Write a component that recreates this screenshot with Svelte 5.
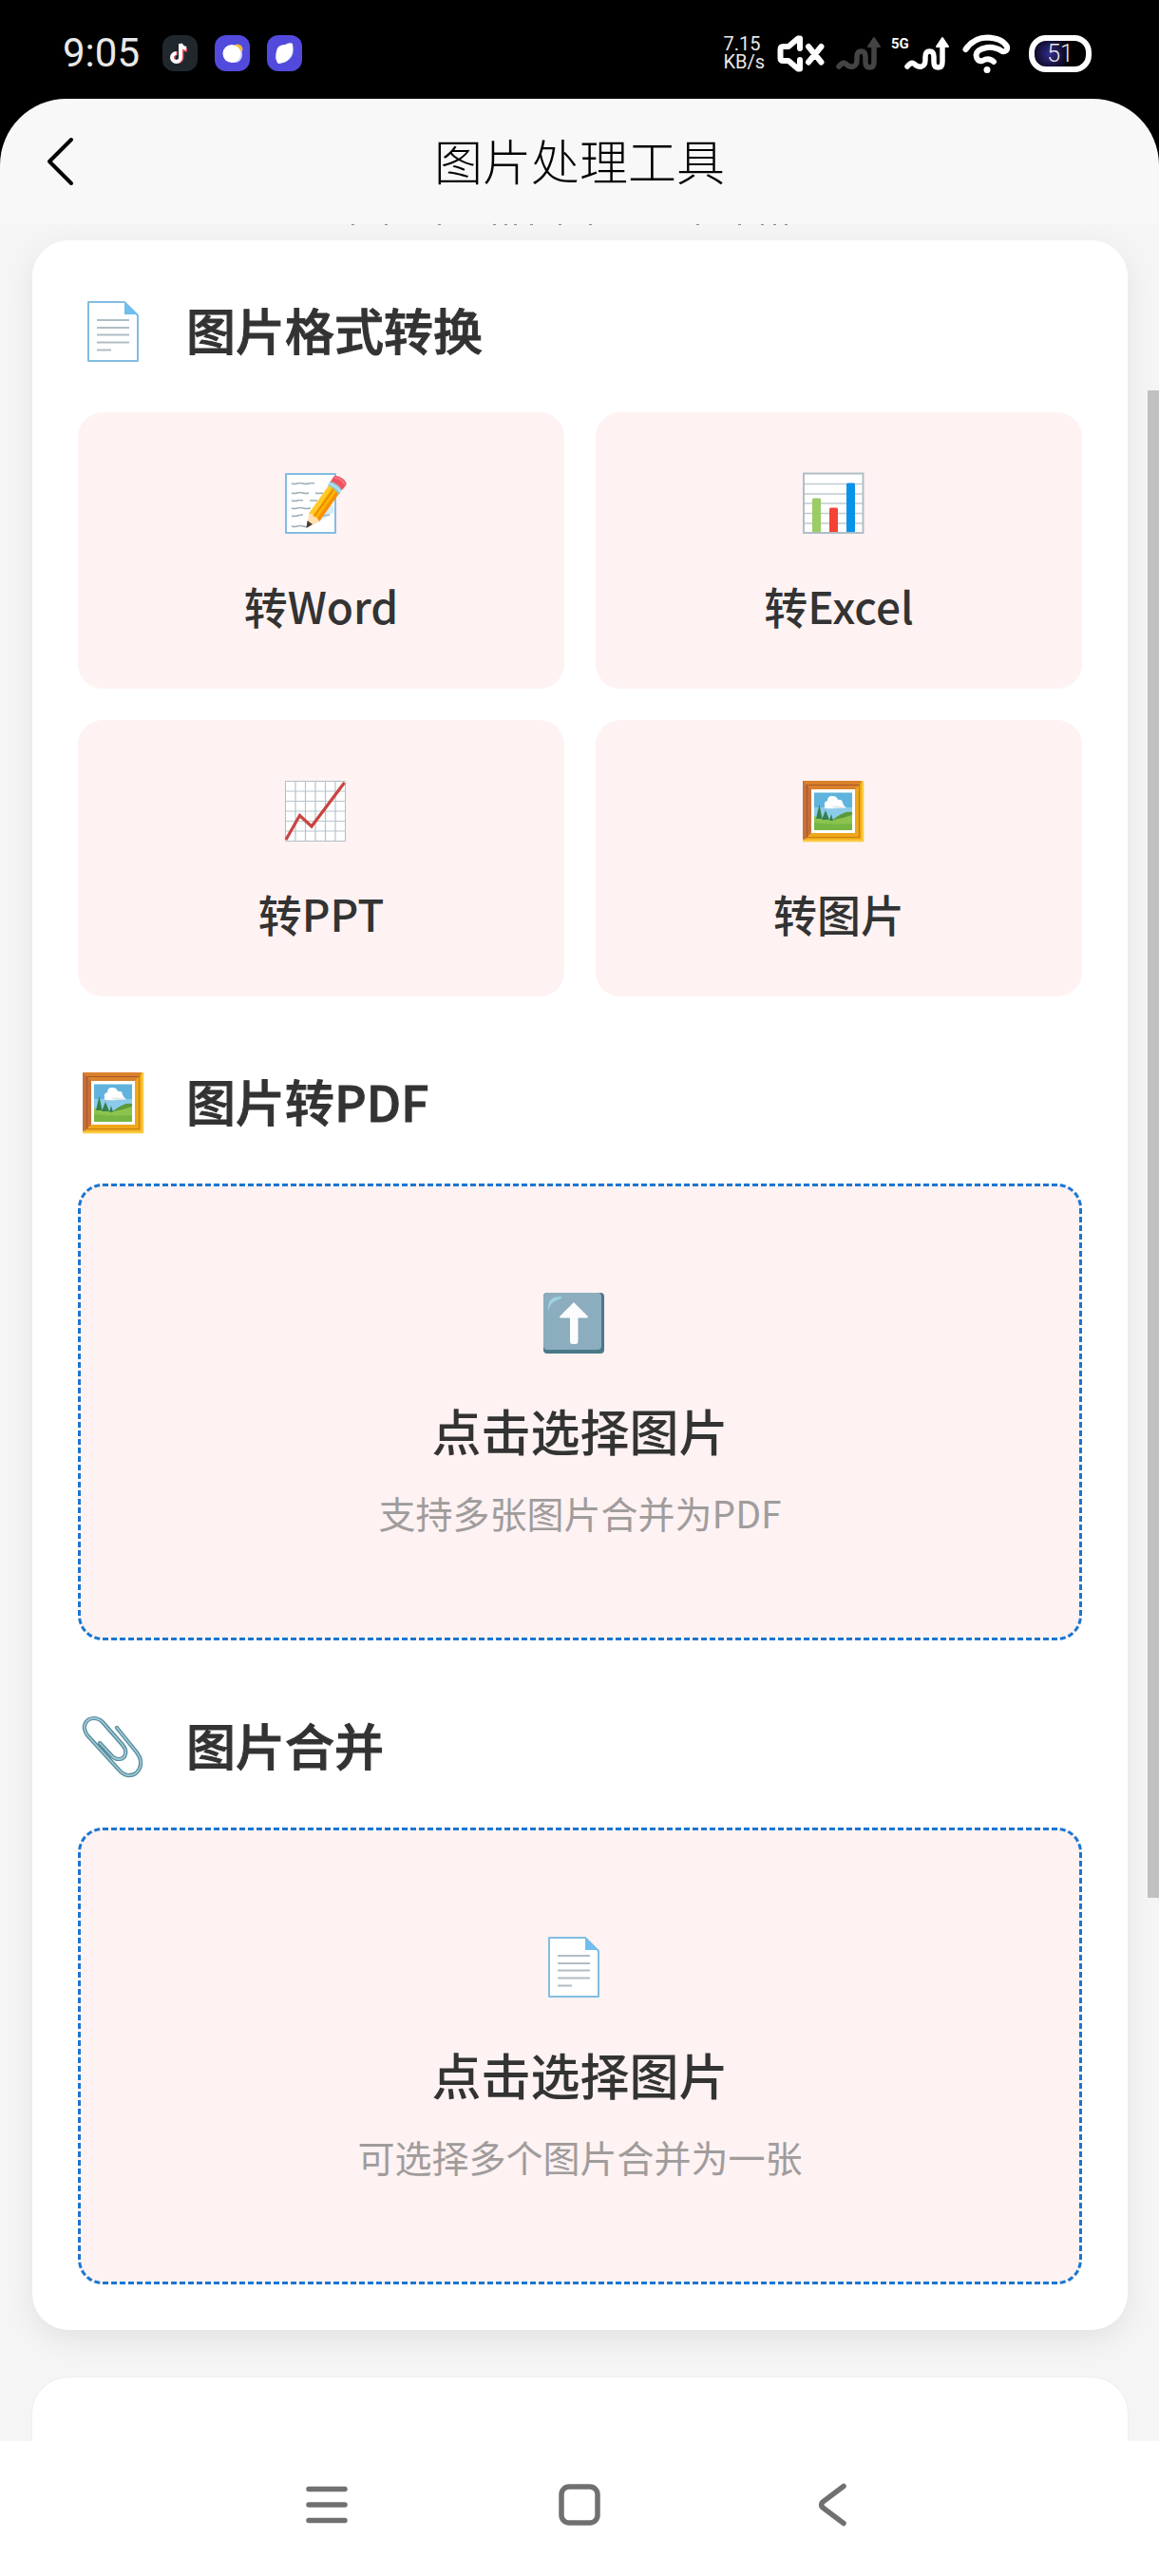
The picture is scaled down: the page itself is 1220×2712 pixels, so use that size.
<script lang="ts">
  const formats = [
    { icon: 'memo', label: '转Word' },
    { icon: 'bars', label: '转Excel' },
    { icon: 'trend', label: '转PPT' },
    { icon: 'frame', label: '转图片' },
  ];
  const uploads = [
    { icon: 'frame', title: '图片转PDF', zoneIcon: 'up', hint: '支持多张图片合并为PDF' },
    { icon: 'clip', title: '图片合并', zoneIcon: 'page', hint: '可选择多个图片合并为一张' },
  ];
  // visible lower ends of the intro line that has scrolled under the header
  const scrolledMarks = [370, 405, 461, 519, 531, 541, 558, 588, 620, 733, 777, 801, 814, 826];
</script>

{#snippet emoji(name: string)}
  <svg class="emoji" viewBox="0 0 64 64" aria-hidden="true">
    {#if name === 'page'}
      <path d="M6 1H44L58 15V63H6Z" fill="#fff" stroke="#82bde2" stroke-width="2" stroke-linejoin="round" />
      <path d="M44 1L58 14H44Z" fill="#70bdf0" />
      <path d="M15 20H49M15 28H49M15 35.500H49M15 43.500H49M15 51.500H30" stroke="#b0bec5" stroke-width="2" />
    {:else if name === 'memo'}
      <path d="M1 1H53V63H1Z" fill="#fff" stroke="#82bde2" stroke-width="2" stroke-linejoin="round" />
      <path d="M52 40Q44 48 27 55L50 33Z" fill="#d5ecfa" />
      <g fill="none" stroke="#9fb0b8" stroke-width="1.400">
        <path d="M7 11q3 1 6 0t6 0t6 0t6 0M7 21q3 1 6 0t6 0t6 0M32 21q3 1 8 0M7 29q3 1 6 0t6 0M26 29h8M7 37q3 1 6 0t6 0t8 0M7 45q3 1 6 0t6 -1M7 56q3 1 6 0t6 0t6 0M40 45l7 -1" />
      </g>
      <path d="M25 43L47 12L58 20L36 51Z" fill="#ffb300" />
      <path d="M25 43L47 12L50 14L29 46Z" fill="#ffca28" />
      <path d="M33 49L55 18L58 20L36 51Z" fill="#f59000" />
      <path d="M31 45L52 16" stroke="#e58600" stroke-width="1.500" />
      <path d="M25 43Q29 42 30 46Q34 46 36 51L23 58Z" fill="#ffe0b2" />
      <path d="M23.500 50L29 54L22.500 58Z" fill="#4a3c3a" />
      <path d="M45 13L48 8Q54 9 60 17L57 23Q52 16 45 13Z" fill="#8bccd8" />
      <path d="M46 11Q53 13 59 20" fill="none" stroke="#bde5eb" stroke-width="1.500" />
      <path d="M48 9L51 4Q54 1 61 6Q66 10 64 13L60 18Q56 11 48 9Z" fill="#ef5360" />
      <path d="M52 5Q59 5 63 12" fill="none" stroke="#f77680" stroke-width="2" />
    {:else if name === 'bars'}
      <path d="M0 0H64V64H0Z" fill="#fff" />
      <path d="M1 11.500H64M1 22H64M1 32H64M1 42.500H64M1 53H64" stroke="#c2cacf" stroke-width="1.300" />
      <path d="M1 0V63H64M0 .5H63.500V64" fill="none" stroke="#b0bec5" stroke-width="2" />
      <path d="M10 28q0 -1.500 1.500 -1.500h6q1.500 0 1.500 1.500V62H10Z" fill="#9ccc65" />
      <path d="M28 38q0 -1.500 1.500 -1.500h6q1.500 0 1.500 1.500V62H28Z" fill="#f44336" />
      <path d="M46 12q0 -1.500 1.500 -1.500h6q1.500 0 1.500 1.500V62H46Z" fill="#0b92ea" />
    {:else if name === 'trend'}
      <path d="M.5 .5H63.500V63.500H.5Z" fill="#fff" stroke="#b0bec5" />
      <path d="M11 0V64M21.500 0V64M32 0V64M42.500 0V64M53 0V64M0 11H64M0 21.500H64M0 32H64M0 42.500H64M0 53H64" stroke="#b8c4ca" stroke-width="1.200" />
      <path d="M1 62L15.500 36.500L28 48L62.500 2" fill="none" stroke="#c94440" stroke-width="3.200" />
    {:else if name === 'frame'}
      <path d="M0 0H64V64H0Z" fill="#e8a313" />
      <path d="M0 0H64L55 9H9Z" fill="#d9822b" />
      <path d="M0 0L9 9V55L0 64Z" fill="#c9703a" />
      <path d="M64 0V64H0L9 55H55V9Z" fill="#efa71b" />
      <path d="M0 63H63V0" fill="none" stroke="#fbc93d" stroke-width="2.500" />
      <path d="M4.500 60V4.500H60" fill="none" stroke="#a9572b" stroke-width="1.200" />
      <path d="M4.500 59.500H59.500V4.500" fill="none" stroke="#c98210" stroke-width="1.200" />
      <path d="M9 9H55V55H9Z" fill="#fff" />
      <path d="M12 12.500H52V52H12Z" fill="#5fb3dc" />
      <path d="M12 28H52V46H12Z" fill="#a5d8ef" opacity=".65" />
      <path d="M30 42Q38 36 43 34Q47 32 52 33V50H30Z" fill="#5a9a3c" />
      <path d="M12 37Q22 42 33 41Q44 39 52 36V52H12Z" fill="#8cc34e" />
      <path d="M12 44Q30 47 52 45V52H12Z" fill="#76b543" />
      <path d="M14 40L17.500 25L20.500 40ZM20 41L24 31L28 41ZM28 42L30 35L32 42Z" fill="#35804a" />
      <path d="M23 26q-1 -4 3 -5q0 -5 5 -5q5 0 6 4q4 -1 5 3q1 4 4 5q-12 2 -22 1q-2 -1 -1 -3Z" fill="#fff" />
      <path d="M30 28q4 -3 8 -1q3 -1 8 1.500q-8 1 -16 -.5Z" fill="#dfe8ee" />
    {:else if name === 'up'}
      <rect width="64" height="64" rx="4" fill="#4a7888" />
      <rect width="61" height="60" rx="4" fill="#8badbe" />
      <path d="M5 17Q4 4 18 4q3 1 -1 3Q8 9 6 17q-.5 3 -1 0Z" fill="#9fd0e0" />
      <path d="M32 10L46.500 24.500q1 2 -1 2H36.500V51q0 3 -2.500 3h-3.500q-2.500 0 -2.500 -3V26.500H18.500q-2 0 -1 -2Z" fill="#fafcfd" />
    {:else}
      <g fill="none" stroke-linecap="round">
        <path d="M36 12L57 38C66 50 59 63 47 62Q42 61 38 56L5 20C-2 10 4 2 12 2Q17 2 21 6L42 30C48 37 45 45 38 45Q34 45 31 42L18 28" stroke="#56899a" stroke-width="4.200" />
        <path d="M36 12L57 38C66 50 59 63 47 62Q42 61 38 56L5 20C-2 10 4 2 12 2Q17 2 21 6L42 30C48 37 45 45 38 45Q34 45 31 42L18 28" stroke="#9cc8d5" stroke-width="1.800" />
      </g>
    {/if}
  </svg>
{/snippet}

{#snippet signal()}
  <svg class="signal" viewBox="880 36 50 40" aria-hidden="true">
    <path d="M884 70q4 -5 7 -3q4 4 8 3q4 -1 4 -7v-3q0 -6 4.500 -6t4.500 6v5q0 6 4.500 6t4.500 -6V46" fill="none" stroke="currentColor" stroke-width="5.500" stroke-linecap="round" />
    <path d="M921 40L927 49H915Z" fill="currentColor" stroke="currentColor" stroke-width="2" stroke-linejoin="round" />
  </svg>
{/snippet}

<div class="screen">
  <div class="status">
    <div class="left">
      <span class="time">9:05</span>
      <svg class="app" viewBox="0 0 37 38" aria-hidden="true">
        <rect width="37" height="38" rx="12" fill="#20282d" />
        <path d="M20.500 11V23.500a4.500 4.500 0 1 1-4.500-4.500M20 11q1 4 6 5" fill="none" stroke="#e2505c" stroke-width="4" />
        <path d="M19 9V23.500a4.500 4.500 0 1 1-4.500-4.500M19 9q1 4 6 5" fill="none" stroke="#fff" stroke-width="4" />
      </svg>
      <svg class="app" viewBox="0 0 37 38" aria-hidden="true">
        <rect width="37" height="38" rx="12" fill="#524add" />
        <circle cx="24" cy="15" r="5.500" fill="#f4bd35" />
        <circle cx="21" cy="21" r="8" fill="#cbd8fa" />
        <circle cx="18" cy="19.500" r="9.500" fill="#fff" />
      </svg>
      <svg class="app" viewBox="0 0 37 38" aria-hidden="true">
        <rect width="37" height="38" rx="12" fill="#524add" />
        <path d="M27 10Q31 26 14 30L11 25Z" fill="#bcd2fa" />
        <path d="M27 9q1 11 -4 16q-3 4 -8 4q-3 2 -4 0q-3 -5 -1 -12q1 -7 9 -7q5 -3 8 -1Z" fill="#fff" />
      </svg>
    </div>
    <div class="right">
      <div class="speed"><span>7.15</span><span>KB/s</span></div>
      <svg class="mute" viewBox="818 34 52 42" aria-hidden="true">
        <path d="M843 50V39.500H841L831 48H825.500Q822.500 48 822.500 51V60Q822.500 63 825.500 63H831L841 71.500H843V62M852 48L865.500 64.500M865.500 48L852 64.500" fill="none" stroke="#fff" stroke-width="6" stroke-linecap="round" stroke-linejoin="round" />
      </svg>
      <span class="dim">{@render signal()}</span>
      <span class="cell"><b>5G</b>{@render signal()}</span>
      <svg class="wifi" viewBox="1013 34 54 43" aria-hidden="true">
        <path d="M1017.500 51Q1026 38.500 1040 38.500Q1056 39 1061 48Q1062 54 1056 53Q1048 48 1040 49Q1029 51 1028.500 57Q1029 64 1035 63Q1042 59 1047 64" fill="none" stroke="#fff" stroke-width="6" stroke-linecap="round" stroke-linejoin="round" />
        <circle cx="1040" cy="72.500" r="3.500" fill="#fff" />
      </svg>
      <span class="battery">51</span>
    </div>
  </div>

  <div class="header-back">
    <header>
      <button class="back" aria-label="返回">
        <svg viewBox="0 0 30 52" aria-hidden="true">
          <path d="M27 3L4 26L27 49" fill="none" stroke="#000" stroke-width="4" stroke-linecap="round" stroke-linejoin="round" />
        </svg>
      </button>
      <h1>图片处理工具</h1>
    </header>
  </div>

  <main>
    <svg class="marks" viewBox="0 0 1220 1" preserveAspectRatio="none" aria-hidden="true">
      {#each scrolledMarks as x}<rect {x} width="3" height="1" />{/each}
    </svg>
    <div class="card">
      <section>
        <h2>{@render emoji('page')}<span>图片格式转换</span></h2>
        <div class="tiles">
          {#each formats as f}
            <button class="tile">{@render emoji(f.icon)}<span>{f.label}</span></button>
          {/each}
        </div>
      </section>
      {#each uploads as u}
        <section>
          <h2>{@render emoji(u.icon)}<span>{u.title}</span></h2>
          <button class="zone">
            {@render emoji(u.zoneIcon)}
            <span class="pick">点击选择图片</span>
            <span class="hint">{u.hint}</span>
          </button>
        </section>
      {/each}
    </div>
    <div class="card next"></div>
    <div class="scrollbar"></div>
  </main>

  <nav>
    <button aria-label="最近任务">
      <svg viewBox="0 0 48 48" aria-hidden="true"><path d="M5 7.500H43M5 24H43M5 40.500H43" stroke="#707070" stroke-width="5.500" stroke-linecap="round" /></svg>
    </button>
    <button aria-label="主屏幕">
      <svg viewBox="0 0 48 48" aria-hidden="true"><rect x="5" y="5" width="38" height="38" rx="8" fill="none" stroke="#707070" stroke-width="5.500" /></svg>
    </button>
    <button aria-label="返回上一页">
      <svg viewBox="0 0 48 48" aria-hidden="true"><path d="M36 4.500L14 21Q11 24 14 27L36 43.500" fill="none" stroke="#707070" stroke-width="5.500" stroke-linecap="round" /></svg>
    </button>
  </nav>
</div>

<style>
  :global(body) {
    margin: 0;
  }
  .screen {
    display: flex;
    flex-direction: column;
    min-height: 100vh;
    font-family: 'Noto Sans CJK SC', sans-serif;
    color: #333;
    background: #f5f5f5;
  }
  svg {
    display: block;
    flex: none;
  }
  button {
    margin: 0;
    padding: 0;
    border: 0;
    background: none;
    font: inherit;
    color: inherit;
  }
  .status {
    display: flex;
    justify-content: space-between;
    align-items: center;
    height: 104px;
    padding: 8px 71px 0 66px;
    box-sizing: border-box;
    background: #000;
    color: #e8e8e8;
    font-family: Roboto, sans-serif;
  }
  .left,
  .right {
    display: flex;
    align-items: center;
  }
  .left {
    gap: 18px;
  }
  .time {
    margin-right: 6px;
    font-size: 42px;
    line-height: 48px;
    font-weight: 400;
  }
  .app {
    width: 37px;
    height: 38px;
  }
  .speed {
    display: flex;
    flex-direction: column;
    margin-right: 12px;
    font-size: 20px;
    line-height: 19px;
  }
  .mute {
    width: 52px;
    height: 42px;
    margin-right: 10px;
  }
  .signal {
    width: 50px;
    height: 40px;
  }
  .dim {
    color: #444;
  }
  .cell {
    display: flex;
    align-items: flex-start;
    margin: 0 11px 0 9px;
    color: #fff;
  }
  .cell b {
    width: 13px;
    font-size: 15px;
    line-height: 20px;
    white-space: nowrap;
  }
  .wifi {
    width: 54px;
    height: 43px;
    margin-right: 17px;
  }
  .battery {
    display: flex;
    align-items: center;
    justify-content: center;
    width: 54px;
    height: 27px;
    border: 6px solid #fff;
    border-radius: 18px;
    background: radial-gradient(circle at 30% 50%, #352c90, #000 55%);
    font-size: 25px;
    line-height: 27px;
    font-weight: 300;
  }
  .header-back {
    background: #000;
  }
  header {
    display: grid;
    grid-template-columns: 1fr auto 1fr;
    align-items: center;
    height: 132px;
    padding: 0 48px;
    background: #f8f8f8;
    border-radius: 70px 70px 0 0;
  }
  .back {
    justify-self: start;
  }
  .back svg {
    width: 30px;
    height: 52px;
  }
  h1 {
    margin: 0 0 4px;
    font-size: 51px;
    line-height: 72px;
    font-weight: 300;
    color: #000;
  }
  main {
    position: relative;
    display: flex;
    flex-direction: column;
    flex: 1;
    padding: 0 33px 0 34px;
    overflow: hidden;
  }
  .marks {
    width: calc(100% + 67px);
    height: 1px;
    margin: 0 -33px 16px -34px;
    fill: #888;
  }
  .card {
    padding: 64px 48px 48px;
    border-radius: 38px;
    background: #fff;
    box-shadow: 0 10px 32px rgba(0, 0, 0, 0.08);
  }
  .next {
    flex: 1;
    margin-top: 50px;
    padding: 0;
    border-radius: 38px 38px 0 0;
    box-shadow: 0 0 2px rgba(0, 0, 0, 0.08);
  }
  .scrollbar {
    position: absolute;
    top: 7.5%;
    right: 0;
    width: 12px;
    height: 68%;
    background: #c1c1c1;
  }
  section + section {
    margin-top: 80px;
  }
  .emoji {
    width: 64px;
    height: 64px;
    margin-right: 13px;
    overflow: visible;
  }
  h2 {
    display: flex;
    align-items: center;
    gap: 32px;
    height: 64px;
    margin: 0 0 53px;
    padding-left: 5px;
    font-size: 52px;
    line-height: 64px;
    font-weight: 500;
    -webkit-text-stroke: 1px #333;
  }
  h2 span {
    padding-bottom: 4px;
  }
  .tiles {
    display: grid;
    grid-template-columns: 1fr 1fr;
    gap: 33px;
  }
  .tile {
    display: flex;
    flex-direction: column;
    align-items: center;
    gap: 45px;
    padding: 64px 0 58px;
    border-radius: 26px;
    background: #fef2f2;
    font-size: 46px;
    line-height: 60px;
    font-weight: 500;
  }
  .zone {
    display: flex;
    flex-direction: column;
    align-items: center;
    width: 100%;
    padding: 112px 0 106px;
    border: 3px dashed #1976d2;
    border-radius: 26px;
    background: #fef2f2;
  }
  .pick {
    margin: 47px 0 26px;
    font-size: 52px;
    line-height: 68px;
    font-weight: 500;
  }
  .hint {
    font-size: 39px;
    line-height: 52px;
    color: #a09c9c;
  }
  nav {
    display: flex;
    justify-content: center;
    align-items: center;
    gap: 218px;
    height: 142px;
    padding-bottom: 8px;
    box-sizing: border-box;
    background: #fff;
  }
  nav svg {
    width: 48px;
    height: 48px;
  }
</style>
